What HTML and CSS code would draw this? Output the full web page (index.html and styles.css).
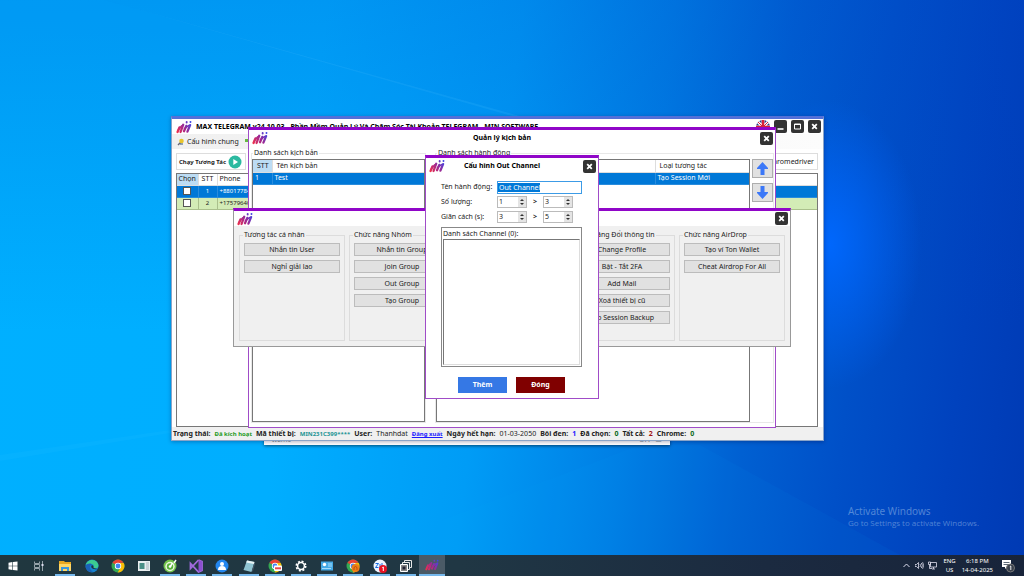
FILE: index.html
```html
<!DOCTYPE html>
<html lang="vi">
<head>
<meta charset="utf-8">
<title>MAX TELEGRAM</title>
<link rel="stylesheet" href="styles.css">
</head>
<body>
<svg class="defs" aria-hidden="true">
  <defs>
    <linearGradient id="brand" gradientUnits="userSpaceOnUse" x1="2" y1="32" x2="40" y2="6"><stop offset="0" stop-color="#f0304a"/><stop offset=".5" stop-color="#a02890"/><stop offset="1" stop-color="#3a46e8"/></linearGradient>
    <symbol id="logo" viewBox="0 0 42 36">
      <g fill="none" stroke="url(#brand)" stroke-width="6" stroke-linecap="round">
        <path d="M4 31 9 19M12 31 19 12M21 29 27 15M30 30 37 13"/><path d="M38 4.500v.5M28 5v1" stroke-width="5"/><path d="M5 27 15 15M22 22 34 14" stroke-width="4"/>
      </g>
    </symbol>
    <symbol id="close" viewBox="0 0 13 13"><rect width="13" height="13" rx="2" fill="#333"/><path d="M4.200 4.200 8.800 8.800M8.800 4.200 4.200 8.800" stroke="#fff" stroke-width="1.800"/></symbol>
    <symbol id="chrome" viewBox="0 0 14 14">
      <circle cx="7" cy="7" r="6.500" fill="#34a853"/><path d="M7 7 1.400 3.700A6.500 6.500 0 0 1 12.600 3.800L7 4Z" fill="#ea4335"/><path d="M7 4h5.700A6.500 6.500 0 0 1 6.600 13.500L9.600 8.500Z" fill="#fbbc05"/><circle cx="7" cy="7" r="3.200" fill="#fff"/><circle cx="7" cy="7" r="2.400" fill="#4285f4"/>
    </symbol>
  </defs>
</svg>
<main class="desktop">
  <svg class="beams" viewBox="0 0 1024 555" preserveAspectRatio="none" aria-hidden="true">
    <path d="M105 0 520 116H512Z" fill="#6cf" opacity=".13"/><path d="M0 0H105L520 116H0Z" fill="#0af" opacity=".08"/>
    <path d="M0 455 170 430V433L0 461Z" fill="#4cf" opacity=".08"/><path d="M640 445 350 555H900L700 445Z" fill="#0af" opacity=".05"/>
  </svg>

  <div class="behind"><span>Items</span><span>OFF &nbsp;▭</span></div>

  <section class="window app">
    <header class="bar">
      <svg class="logo"><use href="#logo"/></svg>
      <h1>MAX TELEGRAM v24.10.03 - Phần Mềm Quản Lý Và Chăm Sóc Tài Khoản TELEGRAM - MIN SOFTWARE</h1>
      <svg class="flag" viewBox="0 0 14 14"><circle cx="7" cy="7" r="7" fill="#27408c"/><path d="M2 2 12 12M12 2 2 12M7 0v14M0 7h14" stroke="#fff" stroke-width="3"/><path d="M7 0v14M0 7h14" stroke="#d8213a" stroke-width="2.500"/><path d="M2 2 12 12M12 2 2 12" stroke="#d8213a"/></svg>
      <button class="tool" aria-label="Minimize"><svg viewBox="0 0 13 13"><rect width="13" height="13" rx="2" fill="#333"/><path d="M3.500 9h6" stroke="#fff" stroke-width="1.600"/></svg></button>
      <button class="tool" aria-label="Maximize"><svg viewBox="0 0 13 13"><rect width="13" height="13" rx="2" fill="#333"/><path d="M3.500 4h6v5h-6zM3 4.500h7" fill="none" stroke="#fff"/></svg></button>
      <button class="tool" aria-label="Close"><svg><use href="#close"/></svg></button>
    </header>
    <nav class="menu">
      <svg viewBox="0 0 8 8"><path d="M1 7 5 3" stroke="#667" stroke-width="1.500"/><circle cx="4.500" cy="3" r="2.300" fill="#e8c52c"/><path d="M3 5.500h3v1H3z" fill="#357"/></svg>
      <button>Cấu hình chung</button>
      <svg viewBox="0 0 8 8"><path d="M1 1h5v3H1z" fill="#6b4"/><path d="M4 4h4v3H4z" fill="#e83"/></svg>
    </nav>
    <div class="actions">
      <button class="run">Chạy Tương Tác <svg viewBox="0 0 14 14"><circle cx="7" cy="7" r="6.500" fill="#2bb9a0"/><path d="M5.300 4v6L10 7Z" fill="#fff"/></svg></button>
      <button class="run plain">Chromedriver</button>
    </div>
    <div class="grid accounts">
      <table>
        <colgroup><col class="c-pick"><col class="c-no"><col></colgroup>
        <thead><tr><th class="on">Chọn</th><th>STT</th><th class="wide">Phone</th></tr></thead>
        <tbody>
          <tr class="sel"><td><input type="checkbox" aria-label="Chọn 1"></td><td>1</td><td class="wide">+88017784</td></tr>
          <tr class="green"><td><input type="checkbox" aria-label="Chọn 2"></td><td>2</td><td class="wide">+17579640</td></tr>
        </tbody>
      </table>
    </div>
    <footer class="status">
      <b>Trạng thái:</b><b class="ok small">Đã kích hoạt</b><b>Mã thiết bị:</b><b class="teal small">MIN231C399****</b><b>User:</b><span>Thanhdat</span><a class="small" href="#">Đăng xuất</a><b>Ngày hết hạn:</b><span>01-03-2050</span><b>Bôi đen:</b><b class="blue">1</b><b>Đã chọn:</b><b class="dark">0</b><b>Tất cả:</b><b class="red">2</b><b>Chrome:</b><b class="dark">0</b>
    </footer>
  </section>

  <section class="window purple manager">
    <header class="bar">
      <svg class="logo"><use href="#logo"/></svg><h2>Quản lý kịch bản</h2>
      <button class="tool" aria-label="Close"><svg><use href="#close"/></svg></button>
    </header>
    <div class="panes">
      <fieldset class="pane left"><legend>Danh sách kịch bản</legend>
        <div class="grid">
          <table>
            <colgroup><col class="c-no"><col></colgroup>
            <thead><tr><th class="on">STT</th><th>Tên kịch bản</th></tr></thead>
            <tbody><tr class="sel"><td>1</td><td>Test</td></tr></tbody>
          </table>
        </div>
      </fieldset>
      <fieldset class="pane right"><legend>Danh sách hành động</legend>
        <div class="grid">
          <table>
            <colgroup><col><col class="c-type"></colgroup>
            <thead><tr><th></th><th>Loại tương tác</th></tr></thead>
            <tbody><tr class="sel"><td></td><td>Tạo Session Mới</td></tr></tbody>
          </table>
        </div>
        <div class="order">
          <button aria-label="Lên"><svg viewBox="0 0 13 15"><path d="M6.500 1 12 7v1H8.500v6h-4V8H1V7Z" fill="#3c78f8"/></svg></button>
          <button aria-label="Xuống"><svg viewBox="0 0 13 15"><path d="M6.500 14 12 8V7H8.500V1h-4v6H1v1Z" fill="#3c78f8"/></svg></button>
        </div>
      </fieldset>
    </div>
  </section>

  <section class="window picker">
    <header class="bar">
      <svg class="logo"><use href="#logo"/></svg><h2></h2>
      <button class="tool" aria-label="Close"><svg><use href="#close"/></svg></button>
    </header>
    <div class="groups">
      <fieldset><legend>Tương tác cá nhân</legend><button>Nhắn tin User</button><button>Nghỉ giải lao</button></fieldset>
      <fieldset><legend>Chức năng Nhóm</legend><button>Nhắn tin Group</button><button>Join Group</button><button>Out Group</button><button>Tạo Group</button></fieldset>
      <fieldset></fieldset>
      <fieldset><legend>Chức năng Đổi thông tin</legend><button>Change Profile</button><button>Bật - Tắt 2FA</button><button>Add Mail</button><button>Xoá thiết bị cũ</button><button>Tạo Session Backup</button></fieldset>
      <fieldset><legend>Chức năng AirDrop</legend><button>Tạo ví Ton Wallet</button><button>Cheat Airdrop For All</button></fieldset>
    </div>
  </section>

  <section class="window purple dialog">
    <header class="bar">
      <svg class="logo"><use href="#logo"/></svg><h2>Cấu hình Out Channel</h2>
      <button class="tool" aria-label="Close"><svg><use href="#close"/></svg></button>
    </header>
    <form>
      <div class="row"><label for="name">Tên hành động:</label><input id="name" class="name" type="text" value="Out Channel"></div>
      <div class="row"><label for="q1">Số lượng:</label>
        <span class="spin"><input id="q1" type="number" value="1"><i></i></span><b>&gt;</b><span class="spin"><input type="number" value="3" aria-label="Số lượng đến"><i></i></span></div>
      <div class="row"><label for="d1">Giãn cách (s):</label>
        <span class="spin"><input id="d1" type="number" value="3"><i></i></span><b>&gt;</b><span class="spin"><input type="number" value="5" aria-label="Giãn cách đến"><i></i></span></div>
      <div class="list"><label for="ch">Danh sách Channel (0):</label><textarea id="ch"></textarea></div>
      <div class="buttons"><button type="button" class="add">Thêm</button><button type="button" class="shut">Đóng</button></div>
    </form>
  </section>

  <aside class="activate"><p>Activate Windows</p><small>Go to Settings to activate Windows.</small></aside>
</main>

<footer class="taskbar">
  <div class="tasks">
  <button aria-label="Start"><svg viewBox="0 0 14 14"><path d="M2.500 3.700 6.400 3.100V6.700H2.500ZM7 3 11.500 2.400V6.700H7ZM2.500 7.300H6.400V10.900L2.500 10.300ZM7 7.300H11.500V11.600L7 11Z" fill="#fff"/></svg></button>
  <button aria-label="Task view"><svg viewBox="0 0 14 14"><path d="M2.500 2.500v2h5v-2M2.500 11.500v-2h5v2M2.500 5.500h5v3h-5zM10.500 2v10" fill="none" stroke="#96a3aa"/><path d="M9.500 5h2v2h-2z" fill="#dde"/></svg></button>
  <button class="open" aria-label="Explorer"><svg viewBox="0 0 14 14"><path d="M1 2h5l1 1h6v9H1z" fill="#e9a922"/><path d="M1 5h12v7H1z" fill="#ffd765"/><path d="M3 8h8v4H9v-2H5v2H3z" fill="#3a97dd"/></svg></button>
  <button aria-label="Edge"><svg viewBox="0 0 14 14"><circle cx="7" cy="7" r="6.500" fill="#1583cf"/><path d="M.8 6C2 0 12 -1 13.400 6c.4 3-2.600 4-5 3 1-1 .6-4-2-4C4 5 2 5 .8 6Z" fill="#3ccb90"/><path d="M.6 7C2 4 6 4 7 5.500 4 6 4 11 8 12.500 4 14 .4 11 .6 7Z" fill="#1b62b8"/><path d="M7 6c-2 2 0 5 5.500 4L8.700 9Q8 8 8.400 7Z" fill="#21313b"/></svg></button>
  <button aria-label="Chrome"><svg><use href="#chrome"/></svg></button>
  <button aria-label="Editor"><svg viewBox="0 0 14 14"><path d="M1 2h12v10H1z" fill="#e9eef0"/><path d="M2.500 4h5v6h-5z" fill="#4b8f86"/><path d="M9 4h3M9 6h3M9 8h3M9 10h3" stroke="#a9b6bd"/></svg></button>
  <button class="open" aria-label="Cốc Cốc"><svg viewBox="0 0 14 14"><circle cx="7" cy="7" r="6.500" fill="#71c24a"/><circle cx="7" cy="7.500" r="4.700" fill="#e8f6dd"/><circle cx="7" cy="7.500" r="3.200" fill="#58b03a"/><path d="M7 8 9.500 4M11 4 13 1" stroke="#fff" stroke-width="1.500"/><circle cx="7" cy="7.500" r="1.300" fill="#fff"/></svg></button>
  <button class="open" aria-label="Visual Studio"><svg viewBox="0 0 14 14"><path d="M9.500 1 13 2.500v9L9.500 13 1.500 4.500v5L9.500 1" fill="none" stroke="#a06add" stroke-width="1.800"/><path d="M9.500 1 13 2.500v9L9.500 13Z" fill="#8b4fd0"/></svg></button>
  <button class="open" aria-label="Contacts"><svg viewBox="0 0 14 14"><circle cx="7" cy="7" r="6.500" fill="#2487ee"/><circle cx="7" cy="5" r="2" fill="#fff"/><path d="M3 11q0-4 4-4t4 4Z" fill="#fff"/></svg></button>
  <button class="open" aria-label="Notepad"><svg viewBox="0 0 14 14"><path d="M5 1.500 12.500 3 9.500 13 1.500 11Z" fill="#8fc3d1"/><path d="M5 1.500 12.500 3 12 5 4.200 3.500Z" fill="#e9f4f5"/><path d="M9.500 13 12.500 3 13 5 11 12Z" fill="#456"/></svg></button>
  <button class="open" aria-label="Chrome mail"><svg viewBox="0 0 14 14"><use href="#chrome"/><rect x="6" y="6.500" width="8" height="5.500" rx="1" fill="#fff"/><path d="M7 9.300h6" stroke="#e34b50" stroke-width="2"/></svg></button>
  <button class="open" aria-label="Settings"><svg viewBox="0 0 14 14"><circle cx="7" cy="7" r="4.700" fill="none" stroke="#fff" stroke-width="1.600" stroke-dasharray="2 1.690"/><circle cx="7" cy="7" r="3.400" fill="none" stroke="#fff" stroke-width="1.500"/></svg></button>
  <button class="open" aria-label="Control Panel"><svg viewBox="0 0 14 14"><path d="M1 2.500h12v9H1z" fill="#45a9e5"/><circle cx="4.500" cy="5.500" r="1.700" fill="#fff"/><path d="M8 5h4M8 7h4M2 9.500h9" stroke="#a4dcfa"/></svg></button>
  <button class="open" aria-label="Chrome profile"><svg viewBox="0 0 14 14"><use href="#chrome"/><circle cx="9.500" cy="9" r="4" fill="#ef7c16"/><path d="M8 11V8.500q1.500-2 3 0V11" fill="none" stroke="#b9500b"/></svg></button>
  <button class="open" aria-label="Zalo"><svg viewBox="0 0 14 14"><circle cx="7" cy="7" r="6.500" fill="#eef5ff"/><path d="M2.500 4.500h3l-3 4h3M7 5v3.500M9 4v3" fill="none" stroke="#1769e0"/><circle cx="10" cy="10" r="4" fill="#e81123"/><path d="M9.300 8.500 10.300 8v4" fill="none" stroke="#fff"/></svg></button>
  <button class="open" aria-label="Windows"><svg viewBox="0 0 14 14"><path d="M1.500 5.500h7v7h-7z" fill="#888" stroke="#fff"/><path d="M3.500 5V3.500h7v7H9M5.500 3V1.500h7v7H11" fill="none" stroke="#e8e8e8"/><path d="M3.500 7.500h3v3h-3z" fill="#223"/></svg></button>
  <button class="open active" aria-label="MAX TELEGRAM"><svg><use href="#logo"/></svg></button>
  </div>
  <div class="tray">
    <svg viewBox="0 0 9 9"><path d="M1.500 6 4.500 3 7.500 6" fill="none" stroke="#dde"/></svg>
    <svg viewBox="0 0 9 9"><path d="M0 3.500h1.500L3.500 1.500v6L1.500 5.500H0zM5 3q1 1.500 0 3M6.300 2q2 2.500 0 5M7.600 1.200q2 3.300 0 6.600" fill="none" stroke="#dde" stroke-width=".8"/></svg>
    <svg viewBox="0 0 9 9"><path d="M2.500 1.500h6v4.500h-6zM4 8h3M5.500 6v2M.5 1h2v2.500h-2zM1.500 3.500V7.500H4" fill="none" stroke="#dde" stroke-width=".8"/></svg>
    <p class="lang">ENG<br>US</p><p class="clock">6:18 PM<br>14-04-2025</p>
    <svg class="note" viewBox="0 0 14 14"><path d="M1 1h9v7H6L4 10V8H1Z" fill="#fff"/><path d="M2.500 3.500h6M2.500 5.500h6" stroke="#345" stroke-width=".8"/><circle cx="9.500" cy="9" r="4" fill="#39404c" stroke="#777"/><path d="M8.800 7.600 9.800 7v4" fill="none" stroke="#fff" stroke-width=".9"/></svg>
  </div>
</footer>
</body>
</html>
```
FILE: styles.css
```css
* { box-sizing: border-box; }
body {
  margin: 0; min-height: 100vh; display: flex; flex-direction: column; overflow: hidden;
  font: 7px/10px "Noto Sans", "DejaVu Sans", sans-serif; color: #222;
}
h1, h2, p { margin: 0; font-size: 7px; line-height: 10px; }
button, input, textarea { font: inherit; color: inherit; margin: 0; padding: 0; border: 0; background: none; }
fieldset { margin: 0; padding: 0; min-width: 0; border: 1px solid #dcdcdc; }
legend { padding: 0 1px; margin-left: 3px; line-height: 8px; white-space: nowrap; }
svg { display: block; }
.defs { position: absolute; width: 0; height: 0; }

.desktop {
  position: relative; flex: 1; overflow: hidden;
  background:
    radial-gradient(ellipse 9% 26% at 81% 44%, rgba(0, 104, 255, .95), rgba(0, 90, 240, 0)),
    linear-gradient(180deg, rgba(0, 70, 200, .22), rgba(0, 120, 230, 0) 60%),
    linear-gradient(97deg, #00b0ff 0%, #00aeff 30%, #009cf6 48%, #007ee4 62%, #0060d2 73%, #0050c8 82%, #0042be 92%, #003ab4 100%);
}
.beams { width: 100%; height: 100%; position: absolute; }

/* Windows */
.window { position: absolute; display: flex; flex-direction: column; background: #fff; }
.bar { display: flex; align-items: center; padding: 0 2px 0 3px; height: 16px; gap: 4px; }
.bar h2 { flex: 1; text-align: center; padding-right: 24px; color: #000; }
.logo { width: 16px; height: 14px; flex: none; }
.tool { width: 13px; height: 13px; flex: none; }
.tool svg { width: 13px; height: 13px; }
.purple { border: 1px solid #a04cc8; border-top: 3px solid #9006c8; }

.behind {
  position: absolute; left: 264px; top: 420px; width: 406px; height: 25px; padding: 15px 8px 0;
  display: flex; justify-content: space-between; background: #fff; color: #788; box-shadow: 0 1px 3px rgba(0, 0, 0, .5);
}

.app { left: 171px; top: 116px; width: 653px; min-height: 325px; border: 1px solid #8aa4c8; border-top: 3px solid #5470d8; box-shadow: 0 1px 4px rgba(0, 0, 60, .3); }
.app h1 { flex: 1; white-space: nowrap; color: #000; }
.app .bar { height: 15px; padding-left: 4px; }
.flag { width: 14px; height: 14px; }
.menu { display: flex; align-items: center; height: 15px; padding: 0 5px; gap: 2px; background: linear-gradient(90deg, #f0f0f0, #fcfcfc); }
.menu svg { width: 8px; height: 8px; }
.menu button + svg { margin-left: 3px; }
.actions { display: flex; justify-content: space-between; padding: 4px 5px 3px 4px; }
.run { display: flex; align-items: center; gap: 2px; height: 17px; padding: 0 3px 0 2px; border: 1px solid #ddd; font-size: 6px; font-weight: bold; }
.run svg { width: 14px; height: 14px; }
.run.plain { font-size: 7px; font-weight: normal; padding: 0 3px; }
.grid { border: 1px solid #777; flex: 1; background: #fff; }
.accounts { margin: 0 5px 0 4px; }
table { width: 100%; border-collapse: collapse; table-layout: fixed; }
th, td { padding: 0 2px; height: 12px; line-height: 10px; text-align: left; white-space: nowrap; font-weight: normal; border-right: 1px solid #ddd; border-bottom: 1px solid #ddd; overflow: hidden; }
th:last-child, td:last-child { border-right: 0; }
.on { background: #bcdcf4; }
.sel { background: #0078d7; color: #fff; }
.sel td { border-color: #2a8cdc; }
.green { background: #d3ecb6; }
.green td { border-color: #aac08c; }
.c-pick { width: 21px; }
.c-no { width: 19px; }
.c-type { width: 94px; }
.accounts th, .accounts td { text-align: center; padding: 0; }
.accounts th { height: 11px; }
.accounts .wide { text-align: left; padding-left: 2px; }
.accounts td { font-size: 6px; }
.accounts input { display: block; margin: 0 auto; width: 8px; height: 8px; appearance: none; background: #fff; border: 1px solid #555; }
.status { display: flex; align-items: center; gap: 4px; height: 13px; padding: 1px 1px 0; background: #f0f0f0; white-space: nowrap; }
.small { font-size: 6px; font-weight: bold; }
.ok { color: #1c9a1c; }
.teal { color: #1c9494; }
.blue, .status a { color: #1a1aff; }
.dark { color: #0a6a20; }
.red { color: #a01010; }

.manager { left: 248px; top: 127px; width: 528px; min-height: 301px; }
.panes { flex: 1; display: flex; gap: 9px; padding: 3px 1px 4px 2px; }
.pane { border-color: #e8e8e8; display: flex; gap: 2px; }
.pane legend { margin-left: 1px; }
.left { flex: 0 0 175px; }
.right { flex: 1; }
.pane .grid { margin: 2px 0 0; }
.manager th { padding-left: 4px; }
.order { display: flex; flex-direction: column; gap: 5px; padding-top: 2px; }
.order button { width: 21px; height: 19px; display: grid; place-items: center; background: #e1e1e1; border: 1px solid #adadad; }
.order svg { width: 13px; height: 15px; }

.picker { left: 233px; top: 208px; width: 558px; min-height: 139px; border: 1px solid #999; border-top: 3px solid #9006c8; background: #f0f0f0; }
.picker .bar { height: 15px; background: #fff; }
.groups { flex: 1; display: grid; grid-template-columns: repeat(5, 1fr); gap: 4px; padding: 5px; }
.groups fieldset { padding: 4px 4px 0; }
.groups legend { margin-left: -1px; }
.groups button { display: block; width: 100%; height: 13px; margin-bottom: 4px; background: #e1e1e1; border: 1px solid #bcbcbc; white-space: nowrap; }

.dialog { left: 425px; top: 155px; width: 174px; min-height: 244px; }
form { flex: 1; display: flex; flex-direction: column; gap: 3px; padding: 7px 16px 5px 15px; }
.row { display: flex; align-items: center; height: 12px; }
.row label { flex: 0 0 56px; }
.row b { flex: 0 0 16px; text-align: center; }
.name { flex: 1; min-width: 0; height: 13px; padding: 0 1px; border: 1px solid #3c9be6; color: #fff; background: linear-gradient(#0078d7, #0078d7) 0 1px / 42px 9px no-repeat; }
.spin { flex: 0 0 30px; height: 12px; display: flex; border: 1px solid #bbb; }
.spin input { flex: 1; width: 10px; padding-left: 1px; appearance: textfield; }
.spin input::-webkit-inner-spin-button { display: none; }
.spin i { width: 8px; display: flex; flex-direction: column; justify-content: space-between; align-items: center; padding: 2px 0; background: #e4e4e4; }
.spin i::before, .spin i::after { content: ""; border: 2px solid transparent; border-top: 0; border-bottom-color: #333; }
.spin i::after { transform: rotate(180deg); }
.list { flex: 1; display: flex; flex-direction: column; margin-top: 1px; padding: 1px; border: 1px solid #888; }
.list textarea { flex: 1; resize: none; border: 1px solid #ddd; border-top-color: #777; border-left-color: #777; background: #fff; }
.buttons { display: flex; justify-content: center; gap: 9px; padding-top: 7px; }
.buttons button { width: 49px; height: 16px; color: #fff; font-weight: bold; }
.add { background: #3578e5; }
.shut { background: #800000; }

.activate { position: absolute; right: 45px; bottom: 27px; color: rgba(160, 195, 235, .5); }
.activate p { font-size: 10px; line-height: 14px; }
.activate small { font: 8px/10px "Open Sans", sans-serif; display: block; }

.taskbar { display: flex; height: 21px; color: #fff; background: linear-gradient(90deg, #20373f, #203744 45%, #1b2a40 75%, #18243a); }
.tasks { width: 445px; display: grid; grid-template-columns: repeat(17, 1fr); }
.tasks button { display: grid; place-items: center; }
.tasks svg { width: 14px; height: 14px; }
.tasks .open { background: linear-gradient(#76b9ed, #76b9ed) center bottom / 20px 2px no-repeat; }
.tasks .active { background: #4a5a66; border-bottom: 2px solid #76b9ed; }
.tray { margin-left: auto; display: flex; align-items: center; gap: 4px; padding-right: 9px; }
.tray > svg { width: 9px; height: 9px; }
.tray p { font-size: 6px; line-height: 9px; text-align: center; }
.tray .lang { padding: 0 2px; }
.tray .note { width: 14px; height: 14px; margin-left: 4px; }
```
